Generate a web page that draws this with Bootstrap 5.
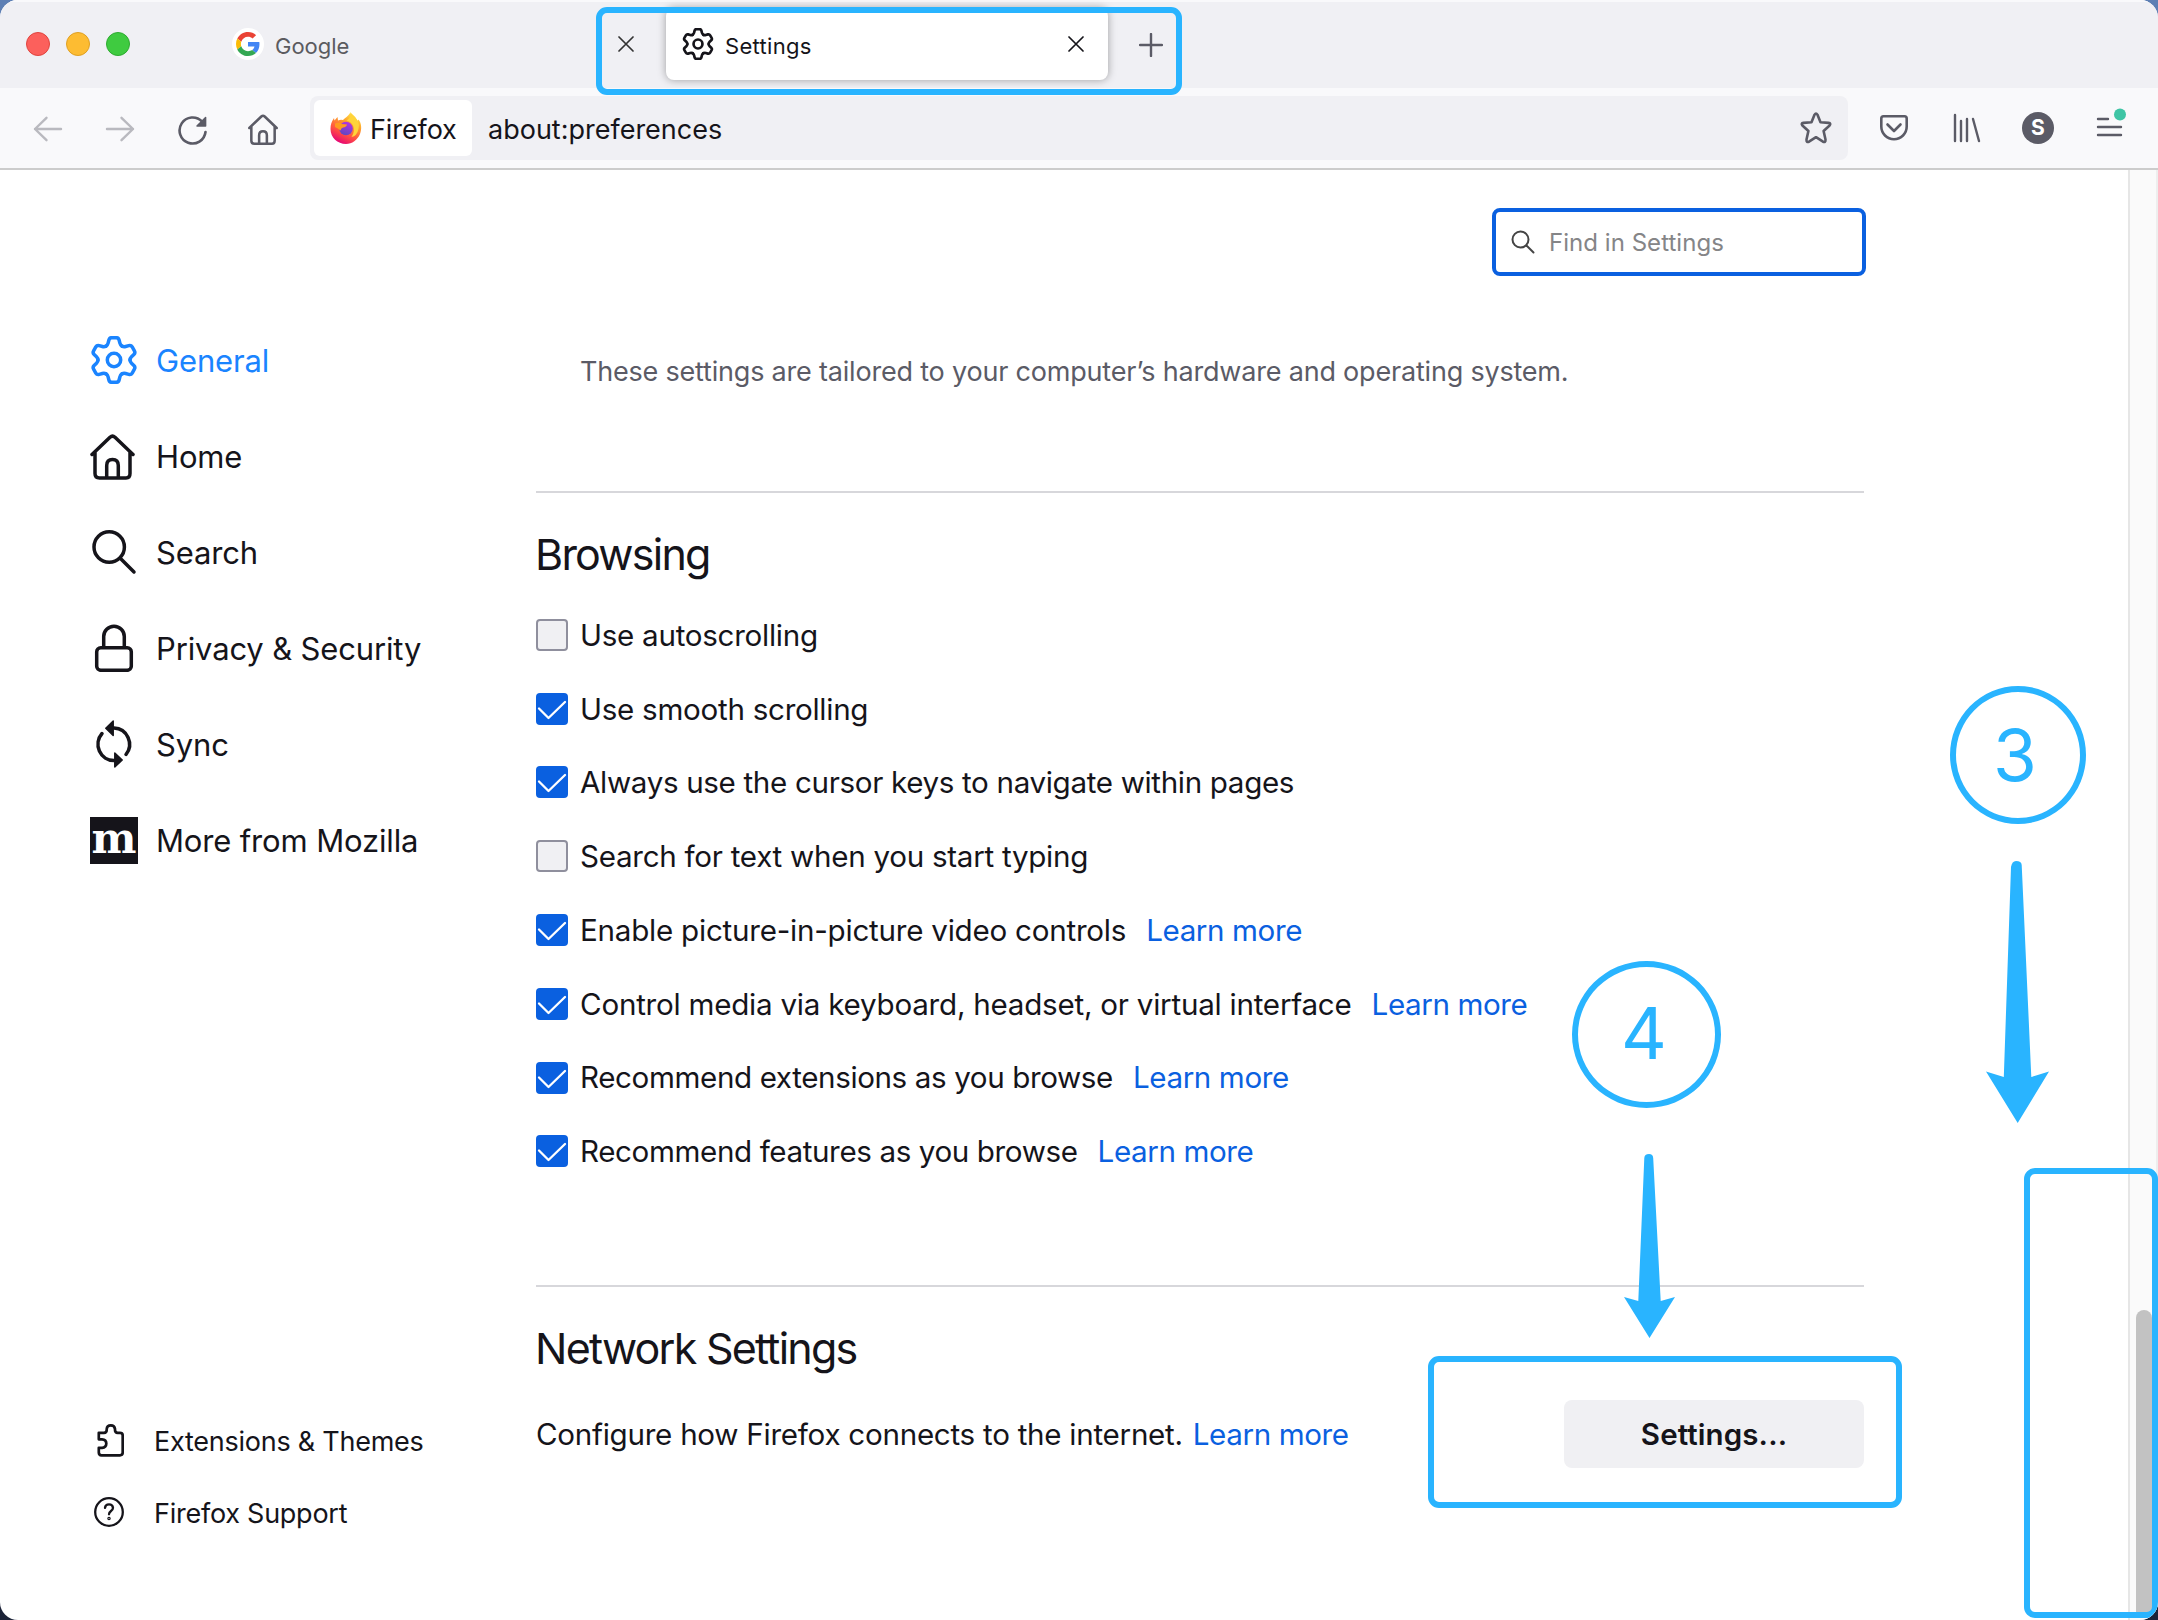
<!DOCTYPE html>
<html lang="en">
<head>
<meta charset="utf-8">
<title>Settings</title>
<link href="https://cdn.jsdelivr.net/npm/bootstrap@5.3.0/dist/css/bootstrap.min.css" rel="stylesheet">
<style>
  body { font-family: Inter, "Liberation Sans", sans-serif; color: #15141a; background: linear-gradient(#5d7fb4 50%, #1c2338 50%); width: 2158px; height: 1620px; overflow: hidden; }
  svg { display: block; flex: none; fill: none; stroke: currentColor; stroke-linecap: round; stroke-linejoin: round; }
  .t { padding-top: 2px; }
  .win { width: 2158px; height: 1620px; background: #fff; border-radius: 18px; overflow: hidden; }
  .tabstrip { height: 88px; background: #f0f0f4; box-shadow: inset 0 2px 0 #f9f9fb; font-size: 22px; padding-left: 26px; }
  .tabstrip .t { margin-top: 2px; }
  .light { width: 24px; height: 24px; border-radius: 50%; border: 1px solid; }
  .l-red { background: #fc605c; border-color: #e0443e; }
  .l-yel { background: #fdbc32; border-color: #dfa023; }
  .l-grn { background: #3fcb40; border-color: #2eab30; }
  .tab-google { width: 434px; margin-left: 102px; color: #5b5b5f; padding-right: 32px; }
  .fav { width: 32px; height: 32px; border-radius: 50%; background: #fff; }
  .tab-active { width: 442px; height: 72px; background: #fff; border-radius: 8px; box-shadow: 0 0 8px rgba(0,0,0,.35); padding: 0 24px 0 16px; letter-spacing: .3px; }
  .toolbar { height: 82px; background: #f9f9fb; border-bottom: 2px solid #ccc; color: #5b5b66; }
  .urlbar { width: 1538px; height: 64px; background: #f0f0f4; border-radius: 8px; padding: 4px 16px 4px 4px; font-size: 27px; color: #15141a; margin-left: 30px; }
  .urlbar .t { padding-top: 4px; }
  .ident { width: 158px; height: 56px; background: #fff; border-radius: 6px; padding-left: 16px; letter-spacing: -.1px; }
  .avatar { width: 32px; height: 32px; border-radius: 50%; background: #5b5b66; color: #fff; font-size: 21px; font-weight: 700; line-height: 32px; }
  .side { width: 536px; padding: 142px 0 71px 90px; }
  .side .main-item { height: 96px; font-size: 31px; gap: 18px; letter-spacing: -.15px; }
  .side .small-item { height: 72px; font-size: 27px; letter-spacing: -.25px; }
  .side .small-item svg { margin: -2px 30px 0 0; }
  .moz-text { font: bold 43px "DejaVu Serif", serif; fill: #fff; stroke: none; letter-spacing: 0; }
  .content-col { width: 1328px; padding-top: 38px; }
  .find { width: 374px; height: 68px; border: 4px solid #0a60e0; border-radius: 8px; margin-right: -2px; padding-left: 15px; font-size: 24px; color: #858587; gap: 14px; letter-spacing: .04px; }
  .note { font-size: 27px; line-height: 40px; margin-top: 76px; padding-left: 44px; color: #5b5b66; letter-spacing: -.2px; }
  .rule { height: 2px; background: #d7d7db; }
  .head { font-size: 43px; line-height: 60px; margin: 31px 0 0 -1px; font-weight: 400; letter-spacing: -1.75px; }
  .opt { height: 73.8px; font-size: 29.6px; letter-spacing: -.28px; }
  .opt .t, .opt .lm { padding-top: 0; padding-bottom: 0; }
  .opt:nth-child(3) { letter-spacing: -.34px; }
  .opt:nth-child(6), .opt:nth-child(5) { letter-spacing: -.24px; }
  .opt:nth-child(7), .opt:nth-child(8) { letter-spacing: -.39px; }
  .box { width: 32px; height: 32px; border-radius: 4px; margin-right: 12px; flex: none; background: #f0f0f3; border: 2px solid #8f8f9d; }
  .box.on { background: #0a60e0; border: 0; color: #fff; }
  .lm { color: #0a60e0; text-decoration: none; margin-left: 20px; letter-spacing: -.4px; }
  .netrow { margin-top: 22px; font-size: 29.6px; letter-spacing: -.27px; }
  .netrow .t { padding-top: 0; }
  .netrow .lm { margin-left: 10px; }
  .set-btn { width: 300px; height: 68px; border: 0; border-radius: 8px; background: #f0f0f3; font-size: 29.5px; font-weight: 600; color: #15141a; padding: 0; letter-spacing: .1px; }
  .gutter { width: 30px; background: #fafafa; border-left: 2px solid #e6e6e6; border-right: 2px solid #eee; padding: 1140px 0 0 6px; }
  .thumb { width: 16px; height: 304px; background: #c2c2c2; border-radius: 8px 8px 0 0; }
  .mark-box { border: 6px solid #29b4ff; border-radius: 11px; }
  .mb-tabs { left: 596px; top: 7px; width: 586px; height: 88px; }
  .mb-btn { left: 1428px; top: 1356px; width: 474px; height: 152px; }
  .mb-scroll { left: 2024px; top: 1168px; width: 134px; height: 450px; }
  .num { border: 6px solid #29b4ff; border-radius: 50%; color: #29b4ff; font-size: 71px; }
  .n3 { left: 1950px; top: 686px; width: 136px; height: 138px; padding-right: 6px; }
  .n4 { left: 1572px; top: 961px; width: 149px; height: 147px; padding: 0 5px 3px 0; }
  .arrows { left: 0; top: 0; fill: #29b4ff; stroke: none; }
</style>
</head>
<body>
<svg width="0" height="0" class="position-absolute">
  <defs>
    <path id="tooth" d="M-8-13.86C-6.6-14.7-6.2-15.6-5.9-16.8L-5.1-20Q-4.5-22.3-2.2-22.3H2.2Q4.5-22.3 5.1-20L5.9-16.8C6.2-15.6 6.6-14.7 8-13.86"/>
    <symbol id="gear" viewBox="-24 -24 48 48">
      <use href="#tooth"/><use href="#tooth" transform="rotate(60)"/><use href="#tooth" transform="rotate(120)"/><use href="#tooth" transform="rotate(180)"/><use href="#tooth" transform="rotate(240)"/><use href="#tooth" transform="rotate(300)"/>
      <circle r="6.7"/>
    </symbol>
    <symbol id="house" viewBox="0 0 48 48">
      <path d="M2 22.5 20 5.2Q22.5 3 25 5.2L43 22.5M5 20.5V41.5Q5 46 9.5 46H36Q40 46 40 41.5V20.5M16.7 46V33.5Q16.7 27.5 22.5 27.5T28.3 33.5V46"/>
    </symbol>
    <symbol id="tick" viewBox="0 0 32 32"><path d="M3 15.5 12.5 25 29 9"/></symbol>
  </defs>
</svg>

<div class="win position-relative d-flex flex-column">
  <div class="tabstrip d-flex align-items-center">
    <div class="d-flex" style="gap:16px"><span class="light l-red"></span><span class="light l-yel"></span><span class="light l-grn"></span></div>
    <div class="tab-google d-flex align-items-center">
      <span class="fav d-flex align-items-center justify-content-center">
        <svg width="24" height="24" viewBox="0 0 48 48"><path fill="#ea4335" stroke="none" d="M24 9.5c3.54 0 6.71 1.22 9.21 3.6l6.85-6.85C35.9 2.38 30.47 0 24 0 14.62 0 6.51 5.38 2.56 13.22l7.98 6.19C12.43 13.72 17.74 9.5 24 9.5z"/><path fill="#4285f4" stroke="none" d="M46.98 24.55c0-1.57-.15-3.09-.38-4.55H24v9.02h12.94c-.58 2.96-2.26 5.48-4.78 7.18l7.73 6c4.51-4.18 7.09-10.36 7.09-17.65z"/><path fill="#fbbc05" stroke="none" d="M10.53 28.59c-.48-1.45-.76-2.99-.76-4.59s.27-3.14.76-4.59l-7.98-6.19C.92 16.46 0 20.12 0 24s.92 7.54 2.56 10.78l7.97-6.19z"/><path fill="#34a853" stroke="none" d="M24 48c6.48 0 11.93-2.13 15.89-5.81l-7.73-6c-2.15 1.45-4.92 2.3-8.16 2.3-6.26 0-11.57-4.22-13.47-9.91l-7.98 6.19C6.51 42.62 14.62 48 24 48z"/></svg>
      </span>
      <span class="t" style="margin-left:11px">Google</span>
      <svg class="ms-auto" width="16" height="16" viewBox="0 0 16 16" stroke-width="1.7" style="color:#333"><path d="M1 1 15 15M15 1 1 15"/></svg>
    </div>
    <div class="tab-active d-flex align-items-center">
      <svg width="32" height="32" stroke-width="4"><use href="#gear"/></svg>
      <span class="t" style="margin-left:11px">Settings</span>
      <svg class="ms-auto" width="16" height="16" viewBox="0 0 16 16" stroke-width="1.7"><path d="M1 1 15 15M15 1 1 15"/></svg>
    </div>
    <svg width="24" height="24" viewBox="0 0 24 24" stroke-width="2.4" style="margin:2px 0 0 31px;color:#5b5b66"><path d="M1 12H23M12 1V23"/></svg>
  </div>

  <div class="toolbar position-relative d-flex align-items-center">
    <svg width="30" height="26" viewBox="0 0 30 26" stroke-width="2.4" style="margin:2px 0 0 33px;opacity:.4"><path d="M28 13H2M13.5 1.8 2 13 13.5 24.2"/></svg>
    <svg width="30" height="26" viewBox="0 0 30 26" stroke-width="2.4" style="margin:2px 0 0 42px;opacity:.4"><path d="M2 13H28M16.5 1.8 28 13 16.5 24.2"/></svg>
    <svg width="32" height="32" viewBox="0 0 32 32" stroke-width="2.6" style="margin:3px 0 0 42px"><path d="M28.5 18A13 13 0 1 1 25 7.5"/><path d="M28.6 3.5V12H20Z" fill="currentColor" stroke-width="1.5"/></svg>
    <svg width="32" height="32" stroke-width="3.8" style="margin:1px 0 0 39px"><use href="#house"/></svg>
    <div class="urlbar d-flex align-items-center">
      <div class="ident d-flex align-items-center">
        <svg width="32" height="32" viewBox="0 0 32 32">
          <defs>
            <linearGradient id="ffa" x1=".8" y1="0" x2=".3" y2="1"><stop offset="0" stop-color="#fff44f"/><stop offset=".35" stop-color="#ffa02a"/><stop offset=".7" stop-color="#ff4a45"/><stop offset="1" stop-color="#e3007a"/></linearGradient>
            <linearGradient id="ffb" x1=".7" y1="0" x2=".3" y2="1"><stop offset="0" stop-color="#b833e1"/><stop offset="1" stop-color="#5a48c0"/></linearGradient>
          </defs>
          <path fill="url(#ffa)" stroke="none" d="M20.5 0C21 4 26 5.5 27.5 9L28.5 7.5C31.5 11 32 17 30 22 27.5 28 22 32 16 32 7.5 32 .5 25.5.5 17 .5 13 1.5 9.5 4 6L4.5 8.5 7.5 5 8 8.500Q10.5 7.3 13 8C15 5.5 18 5 20.5 0Z"/>
          <circle cx="16" cy="16.5" r="6.8" fill="url(#ffb)" stroke="none"/>
          <path fill="#ff9a1f" stroke="none" d="M5 11.5Q10 10 12 12L17 12.5Q16.5 15 13 15.5 11 16 10.5 18.5 8 16 5 15Z"/>
          <path fill="#ffd43a" stroke="none" d="M21 1Q31 9 28.500 17 27 24 21.5 25 25.5 19 23 13.5 21 9.5 16.5 8.5 21 6 21 1Z"/>
        </svg>
        <span class="t" style="margin-left:8px">Firefox</span>
      </div>
      <span class="t" style="margin-left:16px">about:preferences</span>
      <svg class="ms-auto" width="32" height="32" viewBox="0 0 32 32" stroke-width="2.6" style="color:#5b5b66"><path d="M14.6 2.6Q16 .4 17.4 2.6L20.5 10.2 28.6 10.9Q31.3 11.4 29.6 13.5L23.6 19 25.5 27.5Q25.7 30.7 23 29.7L16 25.2 9 29.7Q6.3 30.7 6.5 27.5L8.4 19 2.4 13.5Q.7 11.4 3.4 10.9L11.5 10.2Z"/></svg>
    </div>
    <svg width="30" height="28" viewBox="0 0 30 28" stroke-width="2.6" style="margin-left:31px"><path d="M4.5 2.3H25.5Q27.7 2.3 27.7 4.5V12.5A12.7 12.7 0 0 1 2.3 12.5V4.5Q2.3 2.3 4.5 2.3ZM8.5 10.5 15 17 21.5 10.5"/></svg>
    <svg width="28" height="30" viewBox="0 0 28 30" stroke-width="2.4" style="margin-left:44px"><path d="M2 2V28M8 8V28M14 6V28M20 6 26 28"/></svg>
    <div class="avatar text-center" style="margin-left:41px">S</div>
    <svg width="30" height="30" viewBox="0 0 30 30" stroke-width="2.4" overflow="visible" style="margin-left:42px"><path d="M2 6H12M2 14H25M2 22H25"/><circle cx="24" cy="1.5" r="6" fill="#3fc5a5" stroke="none"/></svg>
  </div>

  <div class="d-flex flex-grow-1">
    <nav class="side d-flex flex-column">
      <div class="main-item d-flex align-items-center" style="color:#1a84ff"><svg width="48" height="48" stroke-width="3.5"><use href="#gear"/></svg><span class="t">General</span></div>
      <div class="main-item d-flex align-items-center"><svg width="48" height="48" stroke-width="3.5"><use href="#house"/></svg><span class="t">Home</span></div>
      <div class="main-item d-flex align-items-center"><svg width="48" height="48" viewBox="0 0 48 48" stroke-width="3.5"><circle cx="19.2" cy="19" r="15.2"/><path d="M30.5 30.5 44 44"/></svg><span class="t">Search</span></div>
      <div class="main-item d-flex align-items-center"><svg width="48" height="48" viewBox="0 0 48 48" stroke-width="3.5"><rect x="6.7" y="23.7" width="34.6" height="22.6" rx="4"/><path d="M13.7 23V12.5A10.3 10.3 0 0 1 34.3 12.5V23"/></svg><span class="t">Privacy &amp; Security</span></div>
      <div class="main-item d-flex align-items-center"><svg width="48" height="48" viewBox="0 0 48 48" stroke-width="3.5"><path d="M24 8A16 16.3 0 0 1 36 34.5M24 40.6A16 16.3 0 0 1 12 13.5"/><path fill="currentColor" stroke-width="1.5" d="M23.2 1V15.5L15.8 8.2ZM24.8 33V47L32.2 40Z"/></svg><span class="t">Sync</span></div>
      <div class="main-item d-flex align-items-center"><svg width="48" height="48" viewBox="0 0 48 48" overflow="visible"><rect y="1" width="48" height="47" fill="#15141a" stroke="none"/><text class="moz-text" x="1.5" y="37" textLength="45" lengthAdjust="spacingAndGlyphs">m</text></svg><span class="t">More from Mozilla</span></div>
      <div class="small-item mt-auto d-flex align-items-center"><svg width="34" height="34" viewBox="0 0 34 34" stroke-width="2.7"><path d="M8.8 9.8H14Q16.7 9.8 16.7 7V6Q17 2.3 20.8 2.3T25 6V7Q25 9.8 27.7 9.8H30Q32.7 9.8 32.7 12.5V29.5Q32.7 32.3 30 32.3H11.5Q8.8 32.3 8.8 29.5V24.8H12Q16.3 24.5 16.3 20.5T12 16.3H8.8Z"/></svg><span class="t">Extensions &amp; Themes</span></div>
      <div class="small-item d-flex align-items-center"><svg width="34" height="34" viewBox="0 0 34 34" stroke-width="2.3"><circle cx="19" cy="17" r="13.8"/><path d="M15 12.8Q15.3 9.3 19 9.3T23 12.8Q23 14.5 21 16T19 19.3"/><circle cx="19" cy="23.5" r=".6"/></svg><span class="t">Firefox Support</span></div>
    </nav>

    <main class="content-col">
      <div class="find ms-auto d-flex align-items-center">
        <svg width="24" height="24" viewBox="0 0 24 24" stroke-width="2" style="color:#444"><circle cx="9.5" cy="9.5" r="8"/><path d="M15.5 15.5 22.5 22.5"/></svg><span class="t">Find in Settings</span>
      </div>
      <div class="note">These settings are tailored to your computer’s hardware and operating system.</div>
      <div class="rule" style="margin-top:99px"></div>
      <h2 class="head">Browsing</h2>
      <div style="margin-top:14px;margin-bottom:97px">
        <div class="opt d-flex align-items-center"><span class="box"></span><span class="t">Use autoscrolling</span></div>
        <div class="opt d-flex align-items-center"><span class="box on"><svg width="32" height="32" stroke-width="2.3"><use href="#tick"/></svg></span><span class="t">Use smooth scrolling</span></div>
        <div class="opt d-flex align-items-center"><span class="box on"><svg width="32" height="32" stroke-width="2.3"><use href="#tick"/></svg></span><span class="t">Always use the cursor keys to navigate within pages</span></div>
        <div class="opt d-flex align-items-center"><span class="box"></span><span class="t">Search for text when you start typing</span></div>
        <div class="opt d-flex align-items-center"><span class="box on"><svg width="32" height="32" stroke-width="2.3"><use href="#tick"/></svg></span><span class="t">Enable picture-in-picture video controls</span><a class="lm">Learn more</a></div>
        <div class="opt d-flex align-items-center"><span class="box on"><svg width="32" height="32" stroke-width="2.3"><use href="#tick"/></svg></span><span class="t">Control media via keyboard, headset, or virtual interface</span><a class="lm">Learn more</a></div>
        <div class="opt d-flex align-items-center"><span class="box on"><svg width="32" height="32" stroke-width="2.3"><use href="#tick"/></svg></span><span class="t">Recommend extensions as you browse</span><a class="lm">Learn more</a></div>
        <div class="opt d-flex align-items-center"><span class="box on"><svg width="32" height="32" stroke-width="2.3"><use href="#tick"/></svg></span><span class="t">Recommend features as you browse</span><a class="lm">Learn more</a></div>
      </div>
      <div class="rule"></div>
      <h2 class="head">Network Settings</h2>
      <div class="netrow d-flex align-items-center">
        <span class="t">Configure how Firefox connects to the internet.</span><a class="lm">Learn more</a>
        <button class="set-btn btn ms-auto">Settings...</button>
      </div>
    </main>
    <div class="gutter ms-auto"><div class="thumb"></div></div>
  </div>

  <div class="mark-box mb-tabs position-absolute"></div>
  <div class="mark-box mb-btn position-absolute"></div>
  <div class="mark-box mb-scroll position-absolute"></div>
  <div class="num n3 position-absolute d-flex align-items-center justify-content-center"><span>3</span></div>
  <div class="num n4 position-absolute d-flex align-items-center justify-content-center"><span>4</span></div>
  <svg class="arrows position-absolute" width="2158" height="1620" viewBox="0 0 2158 1620">
    <path d="M2011 867Q2012 861 2016 861 2021.5 861 2021.7 865L2031.3 1077 2049 1071.5 2017.7 1123 1986 1071.5 2003.8 1077Z"/>
    <path d="M1644.3 1158Q1644.5 1154 1649 1154 1653 1154 1653.2 1158L1660.7 1301 1675 1297 1649.5 1338 1624 1297 1638.3 1301Z"/>
  </svg>
</div>
<script src="https://cdn.jsdelivr.net/npm/bootstrap@5.3.0/dist/js/bootstrap.bundle.min.js"></script>
</body>
</html>
